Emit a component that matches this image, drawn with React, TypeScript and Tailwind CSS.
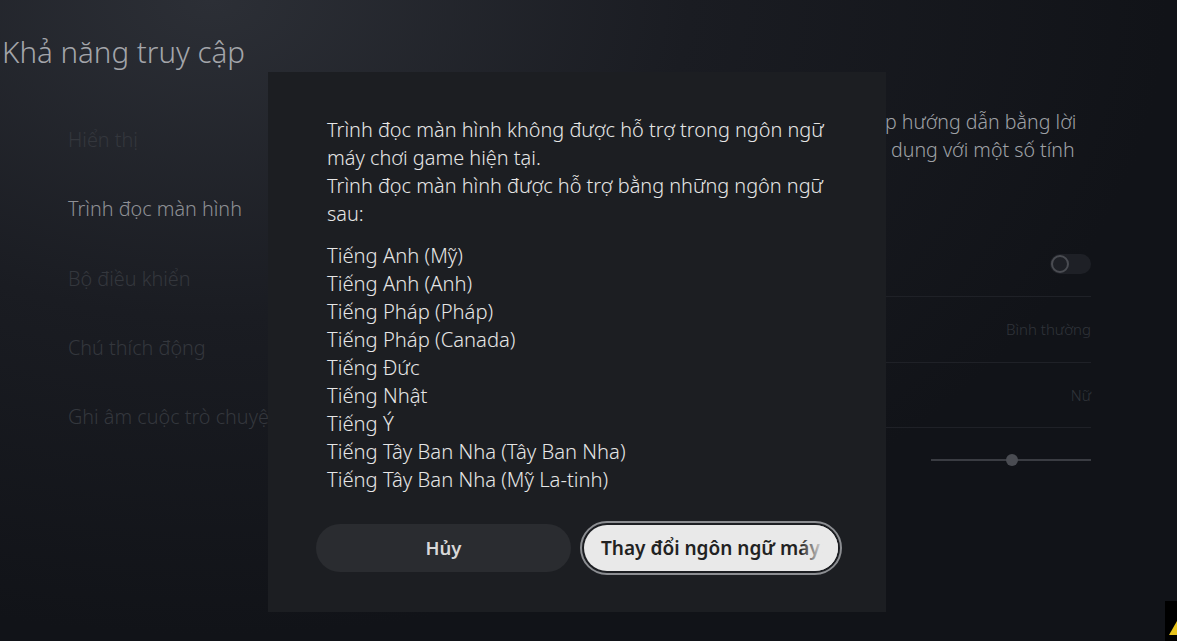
import React from 'react';

const languages = [
  'Tiếng Anh (Mỹ)',
  'Tiếng Anh (Anh)',
  'Tiếng Pháp (Pháp)',
  'Tiếng Pháp (Canada)',
  'Tiếng Đức',
  'Tiếng Nhật',
  'Tiếng Ý',
  'Tiếng Tây Ban Nha (Tây Ban Nha)',
  'Tiếng Tây Ban Nha (Mỹ La-tinh)',
];

const menu = [
  { label: 'Hiển thị', active: false },
  { label: 'Trình đọc màn hình', active: true },
  { label: 'Bộ điều khiển', active: false },
  { label: 'Chú thích động', active: false },
  { label: 'Ghi âm cuộc trò chuyện', active: false },
];

export default function App() {
  return (
    <div
      className="relative h-[641px] w-[1177px] overflow-hidden bg-[#111318] text-[#e8e8e8]"
      style={{ fontFamily: '"Noto Sans", "Open Sans", sans-serif' }}
    >
      {/* background glow */}
      <div className="absolute inset-0 bg-[radial-gradient(ellipse_at_18%_0%,#2c2f36_0%,#1a1c22_35%,#111318_70%)]" />

      <div className="relative flex h-full">
        {/* left column */}
        <div className="w-[268px] shrink-0">
          <h1 className="mt-[32px] pl-[2px] text-[29.5px] font-light leading-[40px] text-[#a3a5aa] whitespace-nowrap">Khả năng truy cập</h1>
          <div className="mt-[52px] flex flex-col gap-[38.3px] pl-[68px]">
            {menu.map((m) => (
              <div
                key={m.label}
                className={`h-[31px] whitespace-nowrap text-[19.8px] font-light leading-[31px] ${m.active ? 'text-[#8e9095]' : 'text-[#34373d]'}`}
              >
                {m.label}
              </div>
            ))}
          </div>
        </div>

        {/* dialog */}
        <div className="z-10 mt-[72px] flex h-[540px] w-[618px] shrink-0 flex-col bg-[#1c1e22] pl-[59px] pt-[44px]">
          <p className="text-[19.9px] font-light leading-[28px] text-[#e6e6e6]">
            Trình đọc màn hình không được hỗ trợ trong ngôn ngữ
            <br />
            máy chơi game hiện tại.
            <br />
            Trình đọc màn hình được hỗ trợ bằng những ngôn ngữ
            <br />
            sau:
          </p>
          <ul className="mt-[13px] text-[20.2px] font-light leading-[28px] text-[#e6e6e6]">
            {languages.map((l) => (
              <li key={l} className="whitespace-nowrap">{l}</li>
            ))}
          </ul>
          <div className="mt-[28px] flex items-center gap-[9px]">
            <button className="-ml-[11px] h-[48px] w-[255px] rounded-full bg-[#2a2c30] text-[18.5px] font-semibold text-[#d8d8d8]">
              Hủy
            </button>
            <div className="rounded-full border-[2px] border-[#8c8e92] p-[2px]">
              <button className="relative h-[46px] w-[254px] overflow-hidden whitespace-nowrap rounded-full bg-[#e9e9e9] pl-[17px] text-left text-[19px] font-semibold text-[#222]">
                Thay đổi ngôn ngữ máy
                <span className="absolute right-[14px] top-0 h-full w-[24px] bg-gradient-to-r from-[#e9e9e9]/0 to-[#e9e9e9]" />
                <span className="absolute right-0 top-0 h-full w-[14px] bg-[#e9e9e9]" />
              </button>
            </div>
          </div>
        </div>

        {/* right column */}
        <div className="relative flex-1">
          <div className="mt-[108px] whitespace-nowrap text-[19.6px] font-light leading-[28px] text-[#9fa1a6]">
            <div className="-ml-[1px]">p hướng dẫn bằng lời</div>
            <div className="ml-[5px]">dụng với một số tính</div>
          </div>
          <div className="mr-[86px] mt-[67px] flex flex-col">
            <div className="flex h-[66px] items-center justify-end border-b border-[#1f2127]">
              <div className="relative h-[20px] w-[41px] rounded-full bg-[#1e2026]">
                <div className="absolute left-[1px] top-[1px] h-[18px] w-[18px] rounded-full border-[2px] border-[#4a4c52]" />
              </div>
            </div>
            <div className="flex h-[66px] items-center justify-end border-b border-[#1f2127] text-[15px] font-light text-[#30333a]">
              Bình thường
            </div>
            <div className="flex h-[65px] items-center justify-end border-b border-[#1f2127] text-[15px] font-light text-[#30333a]">
              Nữ
            </div>
            <div className="flex h-[63px] items-center justify-end">
              <div className="relative h-[2px] w-[160px] bg-[#3a3c42]">
                <div className="absolute left-[75px] top-[-5px] h-[12px] w-[12px] rounded-full bg-[#4a4c52]" />
              </div>
            </div>
          </div>
        </div>
      </div>

      {/* corner indicator */}
      <div className="absolute bottom-0 right-0 h-[40px] w-[12px] bg-black">
        <div className="absolute bottom-[6px] right-0 h-0 w-0 border-b-[14px] border-l-[8px] border-b-[#e6c21a] border-l-transparent" />
      </div>
    </div>
  );
}
